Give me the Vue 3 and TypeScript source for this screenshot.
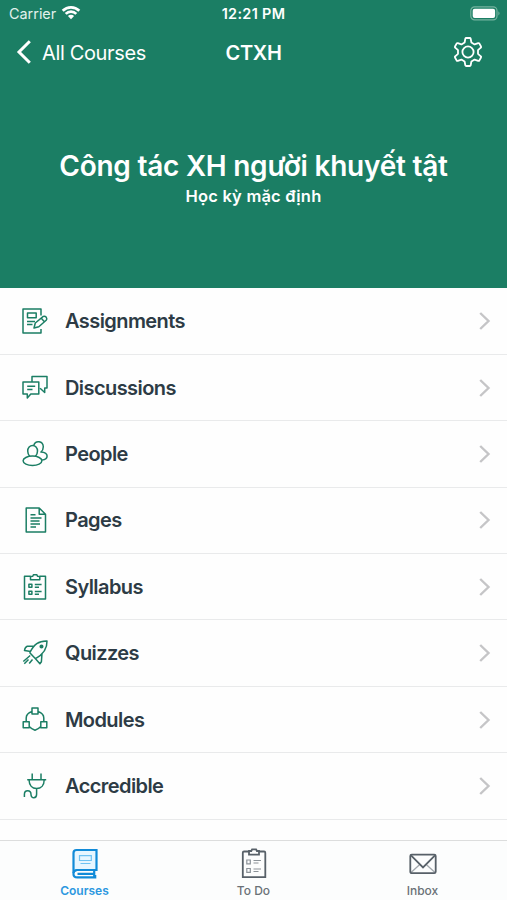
<script setup lang="ts">
type IconName = 'assignments' | 'discussions' | 'people' | 'pages' | 'syllabus' | 'quizzes' | 'modules' | 'accredible'

interface CourseItem {
  label: string
  icon: IconName
}

const items: CourseItem[] = [
  { label: 'Assignments', icon: 'assignments' },
  { label: 'Discussions', icon: 'discussions' },
  { label: 'People', icon: 'people' },
  { label: 'Pages', icon: 'pages' },
  { label: 'Syllabus', icon: 'syllabus' },
  { label: 'Quizzes', icon: 'quizzes' },
  { label: 'Modules', icon: 'modules' },
  { label: 'Accredible', icon: 'accredible' },
]
</script>

<template>
  <div class="screen">
    <header class="hero">
      <div class="status">
        <div class="carrier">
          <span>Carrier</span>
          <svg class="wifi" width="20" height="15" viewBox="0 0 20 15">
            <g fill="none" stroke="#fff" stroke-width="2.7">
              <path d="M1.7 5.7A11.8 11.8 0 0 1 18.3 5.7" />
              <path d="M4.7 8.9A7.5 7.5 0 0 1 15.3 8.9" />
            </g>
            <path d="M6.9 11.1A4.4 4.4 0 0 1 13.1 11.1L10 14.300Z" fill="#fff" />
          </svg>
        </div>
        <span class="time">12:21 PM</span>
        <svg class="battery" width="31" height="15" viewBox="0 0 31 15">
          <rect x=".8" y=".9" width="26.2" height="13" rx="3.8" fill="none" stroke="#75b39f" stroke-width="1.2" />
          <rect x="2.7" y="2.8" width="22.4" height="9.2" rx="2" fill="#fff" />
          <path d="M28.4 5.2q2.3 2.2 0 4.4z" fill="#75b39f" />
        </svg>
      </div>
      <nav class="nav">
        <div class="back">
          <svg width="16" height="26" viewBox="0 0 16 26" fill="none" stroke="#fff" stroke-width="3">
            <path d="M14.800 2.200 4 13l10.800 10.800" />
          </svg>
          <span>All Courses</span>
        </div>
        <span class="code">CTXH</span>
        <svg class="gear" width="32" height="32" viewBox="0 0 32 32" fill="none" stroke="#fff" stroke-width="1.8" stroke-linejoin="round">
          <path d="M14.300 2h3.400q.8 0 1 .8l.7 3.700 3.200 1.900 3.600-1.200q.8-.2 1.200.4l1.600 2.900q.4.700-.2 1.200l-2.800 2.500v3.600l2.800 2.500q.6.500.2 1.200l-1.600 2.900q-.4.600-1.200.4l-3.600-1.200-3.200 1.900-.7 3.700q-.2.800-1 .8h-3.400q-.8 0-1-.8l-.7-3.700-3.200-1.900-3.600 1.200q-.8.200-1.200-.4l-1.600-2.900q-.4-.7.200-1.200l2.800-2.500v-3.600l-2.800-2.500q-.6-.5-.2-1.200l1.600-2.900q.4-.6 1.200-.4l3.600 1.200 3.200-1.900.7-3.700q.2-.8 1-.8z" />
          <circle cx="16" cy="16" r="5.600" />
        </svg>
      </nav>
      <div class="course">
        <h1>Công tác XH người khuyết tật</h1>
        <p>Học kỳ mặc định</p>
      </div>
    </header>

    <main class="list">
      <div v-for="item in items" :key="item.icon" class="row">
        <svg class="icon" width="28" height="28" viewBox="0 0 28 28">
          <g v-if="item.icon === 'assignments'">
            <path d="M20 8.500V2H2v24h18v-4M6.500 6h8.700v4.800H6.500zM6 14.500h8M6 17.500h5.500" />
            <path d="m13 21 1.300-5 8-6.600q1.800-.5 3 .9 1.100 1.600-.1 3l-7.400 6.400zM20.300 11.200l3.300 3.700" />
          </g>
          <g v-else-if="item.icon === 'discussions'">
            <path d="M11 8V2.500h15v11.600h-2.300v4.400l-4.600-4.200M2 8h15.800v12h-8l-3.500 4v-4H2zM6.200 12.200h8M6.200 15.500h5.300" />
          </g>
          <g v-else-if="item.icon === 'people'">
            <path d="M12.800 5.200A4.900 5.300 0 0 1 22.300 6.700c0 2.400-.9 4.200-2.400 5.300 3.800.3 6.200 2 6.200 4.100 0 2.100-1.800 3.700-5 4" />
            <path d="M8.800 16.300C7.400 14.900 6.700 13.100 6.700 11A4.900 5.600 0 0 1 16.500 11c0 2.100-.7 3.900-2.100 5.300" />
            <ellipse cx="11.500" cy="20.800" rx="9.400" ry="4.700" />
          </g>
          <g v-else-if="item.icon === 'pages'">
            <path d="M5.200 2h13l6.300 6.200V26H5.200zM18.200 2v6.200h6.300M9.500 8.800h5M9.500 12h11M9.500 15h9M9.500 18h9.500M9.500 21h5.500" />
          </g>
          <g v-else-if="item.icon === 'syllabus'">
            <path d="M9.500 3.300H3.500V26h21V3.300h-5.800" />
            <path d="M9.500 6.700V3.600l2.300-.4.600-1.400h3.500l.6 1.400 2.300.4v3.100zM7.900 11.300h3v3h-3zM7.900 18.300h3v3h-3zM13.800 11.500h6.800M13.800 14.200h4.200M13.800 18.500h6.800M13.800 21.200h4.200" />
          </g>
          <g v-else-if="item.icon === 'quizzes'">
            <path d="M8.800 13.700C13 5.500 17.500 1.800 26 2c.3 8-3.500 13.200-11.500 17.700zM13.500 7.200H6.200Q4 8 3.500 11.500l6.300.9M21 14.500l-.6 8.200-1.500 2.100-4.400-5.100M9.200 16.500 2.300 22.500M7.500 20.500l-4.200 4.300M11.500 20.500 8.200 24.500" />
            <circle cx="20.500" cy="7.500" r="1.300" fill="#1b7e64" />
          </g>
          <g v-else-if="item.icon === 'modules'">
            <path d="M11 2h6v6.100h-6zM2.200 15.700h6v6h-6zM19.800 15.700h6v6h-6zM11 5.500Q5.200 7.500 5.200 12v3.700M17 5.500q5.800 2 5.800 6.500v3.700M8.200 20.500q2.500 2.700 5.800 3.700 3.300-1 5.800-3.700" />
          </g>
          <g v-else>
            <path d="M11.200 1.500v6M20 1.500v6M6.200 7.700h19M8 7.700c.2 5.500 3.200 8.800 7.600 8.800s7.600-3.300 7.600-8.800M15.600 16.500v5.800c0 4.600-5.600 4.600-5.600.3 0-5.200-6.600-5-6.600-.2v2.600" />
          </g>
        </svg>
        <span class="label">{{ item.label }}</span>
        <svg class="chevron" width="12" height="20" viewBox="0 0 12 20" fill="none" stroke="#c5c5c7" stroke-width="2.400">
          <path d="m1.200 2 8.300 8-8.300 8" />
        </svg>
      </div>
    </main>

    <footer class="tabs">
      <div class="tab active">
        <svg width="32" height="32" viewBox="0 0 32 32" fill="none" stroke="#118bd8" stroke-width="2.200">
          <path d="M7.500 3h20v20H8.200q-3.700.3-3.700 3V6q0-3 3-3z" fill="#e7f6ff" />
          <path d="M27.500 23H8.200c-5 0-5 7.400 0 7.400h18V29h-1v-5M8.500 26.800h16" />
          <path d="M10.500 8.700h11.800v4.800H10.500zM11.500 16.500h10" stroke="#6fc2f2" stroke-width="1.200" />
        </svg>
        <span>Courses</span>
      </div>
      <div class="tab">
        <svg width="32" height="32" viewBox="0 0 32 32" fill="none" stroke="#576068" stroke-width="1.800">
          <path d="M11 4.500H6q-1.200 0-1.200 1.200v24.500h22.500V5.700q0-1.200-1.200-1.200h-5M11 7.700V4h2.300l.8-1.700h4l.8 1.700H21v3.700z" />
          <path d="M8.800 13h3.500v3.800H8.800zM8.800 21.500h3.500v3.800H8.800zM15.500 13.500h7.500M15.500 16h5M15.500 22h7.500M15.500 24.500h5" stroke="#8b9298" stroke-width="1.200" />
        </svg>
        <span>To Do</span>
      </div>
      <div class="tab">
        <svg width="32" height="32" viewBox="0 0 32 32" fill="none" stroke="#576068" stroke-width="1.800">
          <path d="m4 25.500 8.500-7.800M28 25.500l-8.500-7.800" stroke="#a1a7ac" stroke-width="1.300" />
          <rect x="3.300" y="7.600" width="25.400" height="18.600" rx="1.500" />
          <path d="M4 8.400 16 20.500 28 8.400" />
        </svg>
        <span>Inbox</span>
      </div>
    </footer>
  </div>
</template>

<style>
body {
  margin: 0;
  background: #fff;
}
</style>

<style scoped>
.screen {
  display: flex;
  flex-direction: column;
  width: 507px;
  height: 900px;
  overflow: hidden;
  background: #fefefe;
  font-family: Inter, "Liberation Sans", sans-serif;
}
svg {
  display: block;
  flex: none;
}
.hero {
  height: 288px;
  box-sizing: border-box;
  background: #1b7e64;
  color: #fff;
}
.status,
.nav {
  display: grid;
  grid-template-columns: 1fr auto 1fr;
  align-items: center;
}
.status {
  height: 27px;
  padding: 0 6px;
  font-size: 14.400px;
}
.carrier {
  display: flex;
  align-items: center;
  gap: 5px;
  padding-left: 3px;
  color: #e2f1ec;
}
.wifi {
  margin-top: -2px;
}
.time {
  font-weight: 600;
  font-size: 14.400px;
  letter-spacing: 0.350px;
}
.battery,
.gear {
  justify-self: end;
}
.nav {
  height: 50px;
  padding: 0 15px;
}
.back {
  display: flex;
  align-items: center;
  gap: 11px;
  font-size: 20px;
  letter-spacing: -0.350px;
  white-space: nowrap;
}
.back span,
.code {
  padding-top: 1px;
}
.code {
  font-size: 20px;
  font-weight: 600;
  letter-spacing: -0.300px;
}
.gear {
  margin-right: 8px;
}
.course {
  padding-top: 71px;
  text-align: center;
}
h1,
p {
  margin: 0;
  white-space: nowrap;
}
h1 {
  font-size: 28px;
  font-weight: 600;
  line-height: 36px;
  letter-spacing: -0.250px;
}
p {
  font-size: 16.500px;
  font-weight: 600;
  line-height: 25px;
  letter-spacing: 0.200px;
}
.list {
  height: 552px;
  box-sizing: border-box;
  padding-top: 0.500px;
}
.row {
  display: flex;
  align-items: center;
  height: 66.400px;
  box-sizing: border-box;
  padding: 0 16px 0 21px;
  border-bottom: 1px solid #e9eaeb;
}
.icon {
  fill: none;
  stroke: #1b7e64;
  stroke-width: 1.500;
  stroke-linejoin: round;
}
.label {
  flex: 1;
  margin-left: 16px;
  color: #2d3b45;
  font-size: 20px;
  font-weight: 600;
  letter-spacing: -0.580px;
}
.tabs {
  display: grid;
  grid-template-columns: repeat(3, 1fr);
  height: 60px;
  box-sizing: border-box;
  border-top: 1px solid #dcdddd;
  background: #fcfdfd;
}
.tab {
  display: flex;
  flex-direction: column;
  align-items: center;
  padding-top: 6px;
  gap: 4px;
  color: #6a7177;
  font-size: 12px;
  font-weight: 500;
  line-height: 16px;
}
.active {
  color: #2c98e0;
  font-weight: 600;
}
</style>
